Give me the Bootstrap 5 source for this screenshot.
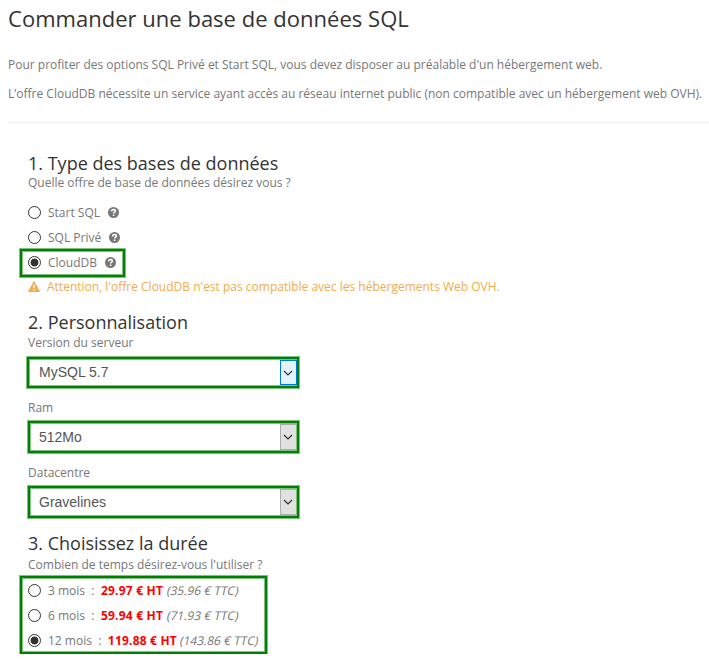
<!DOCTYPE html>
<html lang="fr">
<head>
<meta charset="utf-8">
<meta name="viewport" content="width=device-width, initial-scale=1">
<title>Commander une base de données SQL</title>
<link href="https://cdn.jsdelivr.net/npm/bootstrap@5.3.0/dist/css/bootstrap.min.css" rel="stylesheet">
<style>
html, body { overflow: hidden; }
body { font-family: "Open Sans", "Noto Sans", sans-serif; font-size: 12px; line-height: 20px; color: #777; background: #fff; }
.page { padding-left: 8px; white-space: nowrap; }
h1 { font-size: 22px; line-height: 26px; color: #333; margin: 5px 0 24px; font-weight: 400; letter-spacing: .02px; }
h2 { font-size: 18px; line-height: 20px; color: #333; margin: 0; font-weight: 400; }
.page p { margin-bottom: 9px; }
.rule { height: 1px; background: #eee; margin-top: 18px; }
.step { padding-left: 20px; }
.step-type { padding-top: 30px; }
.step-custom { padding-top: 13px; }
.step-time { padding-top: 15px; }
.step-custom h2 { margin-bottom: 1px; }
.step-time h2 { margin-bottom: 2px; }
.choices { padding-top: 7px; }
.choice { height: 25px; }
.page .form-check-input { width: 13px; height: 13px; margin: 0 7px 0 0; border: 1px solid #333; background: #fff; float: none; flex: none; }
.page .form-check-input:checked { background: radial-gradient(circle, #333 3.6px, transparent 4.3px); }
.frame { border: 2px solid #008000; box-shadow: 0 0 0 1px #80c080, inset 0 0 0 1px #80c080; }
.frame-choice { width: 105px; height: 28px; margin: -1px 0 -2px -8px; padding: 0 0 1px 6px; }
.frame-prices { width: 247px; height: 78px; margin: 1px 0 0 -8px; padding-left: 6px; }
.help { margin-left: 8px; }
.alert-line { color: #f0ad4e; height: 24px; }
.alert-line svg { margin: 0 7px 2px 0; }
.field-label { margin-top: 10px; }
.picker { width: 272px; height: 31px; margin: 4px 0 0 -1px; padding: 1px 0 1px 10px; font: 14px/25px "Liberation Sans", Arial, sans-serif; color: #555; }
.picker-short { width: 271px; height: 32px; margin: 3px 0 0; padding-left: 9px; line-height: 26px; }
.arrow { width: 17px; padding-right: 1px; background: #e1e1e1; border: 1px solid #adadad; border-right: 1px solid #80c080; }
.arrow-active { background: #e5f1fb; border-color: #0078d7; }
.price { color: #f00; letter-spacing: .2px; margin-left: .3px; }
.taxed { display: inline-block; transform: skewX(-12deg); margin-left: .3px; }
</style>
</head>
<body>
<main class="page">
  <h1>Commander une base de données SQL</h1>
  <p>Pour profiter des options SQL Privé et Start SQL, vous devez disposer au préalable d'un hébergement web.</p>
  <p class="mb-0">L’offre CloudDB nécessite un service ayant accès au réseau internet public (non compatible avec un hébergement web OVH).</p>
  <div class="rule"></div>

  <svg width="0" height="0" class="d-block">
    <symbol id="help" viewBox="0 0 10 10"><circle cx="5" cy="5" r="5" fill="#777"/><path d="M3.2 4C3.3 2.7 4 2.2 5 2.2c1 0 1.7.5 1.7 1.4C6.7 4.8 5.1 4.7 5.1 6" fill="none" stroke="#fff" stroke-width="1.4"/><path d="M4.4 6.8h1.4v1.4H4.4z" fill="#fff"/></symbol>
    <symbol id="chevron" viewBox="0 0 10 6"><path d="M1 1l4 4 4-4" fill="none" stroke="#333" stroke-width="1.2"/></symbol>
  </svg>

  <section class="step step-type">
    <h2>1. Type des bases de données</h2>
    <div>Quelle offre de base de données désirez vous ?</div>
    <div class="choices">
      <label class="choice d-flex align-items-center"><input class="form-check-input" type="radio" name="offer"><span>Start SQL</span><svg class="help" width="11" height="11"><use href="#help"/></svg></label>
      <label class="choice d-flex align-items-center"><input class="form-check-input" type="radio" name="offer"><span>SQL Privé</span><svg class="help" width="11" height="11"><use href="#help"/></svg></label>
      <label class="frame frame-choice d-flex align-items-center"><input class="form-check-input" type="radio" name="offer" checked><span>CloudDB</span><svg class="help" width="11" height="11"><use href="#help"/></svg></label>
    </div>
    <div class="alert-line d-flex align-items-center"><svg width="12" height="11" viewBox="0 0 12 11"><path d="M6 .5L11.5 10.5H.5z" fill="#f0ad4e" stroke="#f0ad4e" stroke-linejoin="round"/><path d="M5.2 3.6h1.6l-.2 3.6H5.4zM5.3 8h1.4v1.4H5.3z" fill="#fff"/></svg><span>Attention, l'offre CloudDB n'est pas compatible avec les hébergements Web OVH.</span></div>
  </section>

  <section class="step step-custom">
    <h2>2. Personnalisation</h2>
    <div>Version du serveur</div>
    <div class="frame picker d-flex justify-content-between"><span>MySQL 5.7</span><span class="arrow arrow-active d-flex align-items-center justify-content-center"><svg width="10" height="6"><use href="#chevron"/></svg></span></div>
    <div class="field-label">Ram</div>
    <div class="frame picker picker-short d-flex justify-content-between"><span>512Mo</span><span class="arrow d-flex align-items-center justify-content-center"><svg width="10" height="6"><use href="#chevron"/></svg></span></div>
    <div class="field-label">Datacentre</div>
    <div class="frame picker picker-short d-flex justify-content-between"><span>Gravelines</span><span class="arrow d-flex align-items-center justify-content-center"><svg width="10" height="6"><use href="#chevron"/></svg></span></div>
  </section>

  <section class="step step-time">
    <h2>3. Choisissez la durée</h2>
    <div>Combien de temps désirez-vous l'utiliser ?</div>
    <div class="frame frame-prices">
      <label class="choice d-flex align-items-center"><input class="form-check-input" type="radio" name="time"><span>3 mois &nbsp;: &nbsp;<b class="price">29.97 € HT</b> <span class="taxed">(35.96 € TTC)</span></span></label>
      <label class="choice d-flex align-items-center"><input class="form-check-input" type="radio" name="time"><span>6 mois &nbsp;: &nbsp;<b class="price">59.94 € HT</b> <span class="taxed">(71.93 € TTC)</span></span></label>
      <label class="choice d-flex align-items-center"><input class="form-check-input" type="radio" name="time" checked><span>12 mois &nbsp;: &nbsp;<b class="price">119.88 € HT</b> <span class="taxed">(143.86 € TTC)</span></span></label>
    </div>
  </section>
</main>
<script src="https://cdn.jsdelivr.net/npm/bootstrap@5.3.0/dist/js/bootstrap.bundle.min.js"></script>
</body>
</html>
